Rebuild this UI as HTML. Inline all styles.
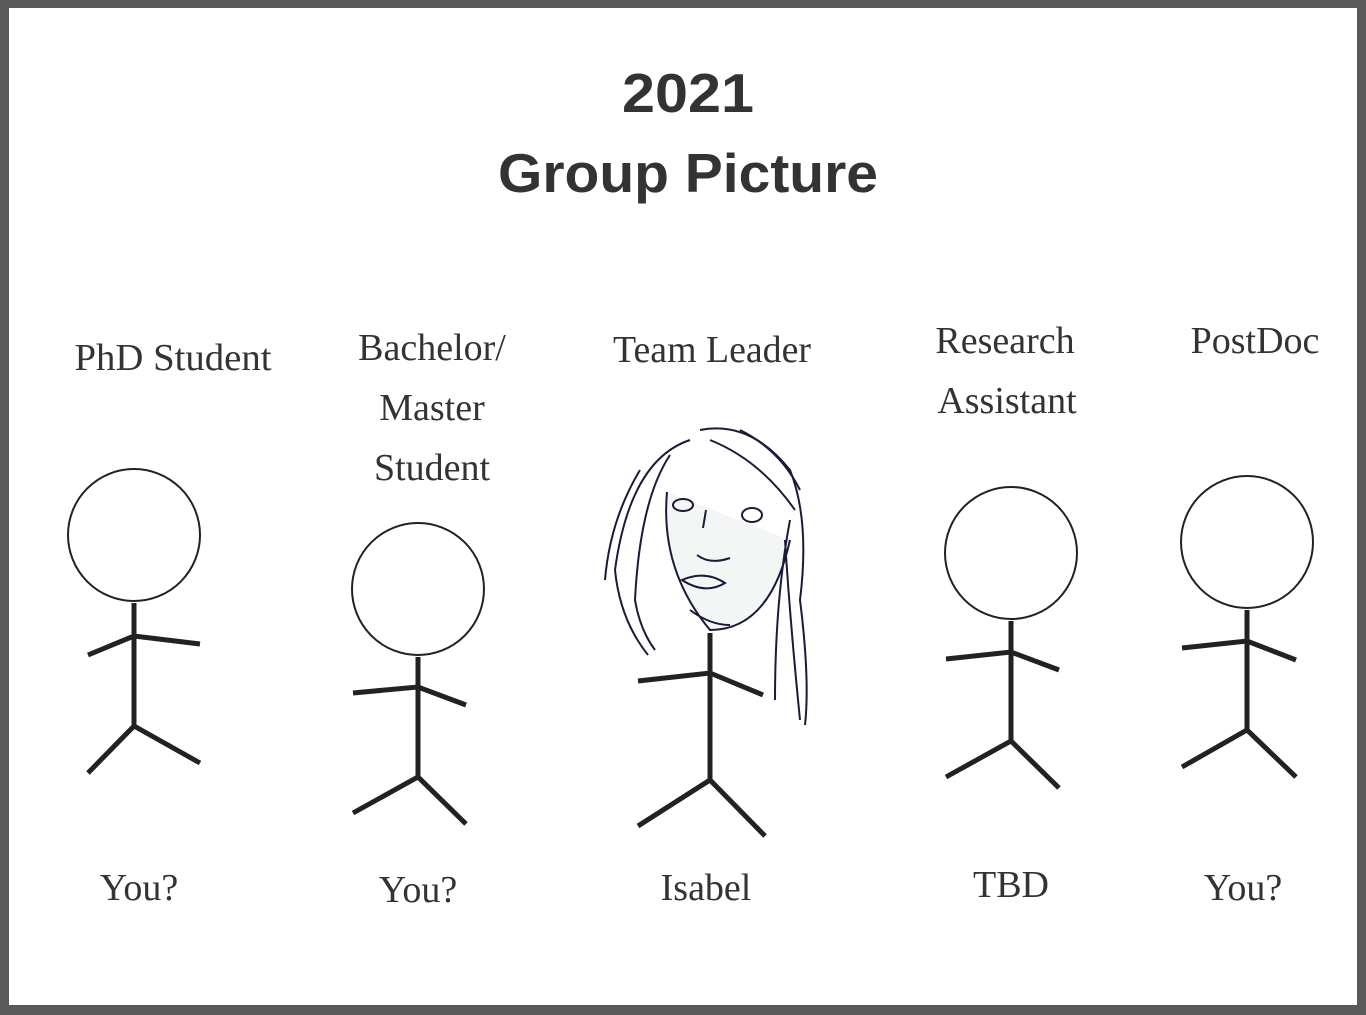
<!DOCTYPE html>
<html><head><meta charset="utf-8"><style>
html,body{margin:0;padding:0;background:#fff}
svg{display:block}
.t{font-family:"Liberation Serif",serif;font-size:38px;fill:#333;text-anchor:middle}
.h{font-family:"Liberation Sans",sans-serif;font-weight:bold;font-size:55px;fill:#333;text-anchor:middle}
</style></head><body>
<svg width="1366" height="1015" viewBox="0 0 1366 1015" xmlns="http://www.w3.org/2000/svg">
<rect x="0" y="0" width="1366" height="1015" fill="#595959"/>
<rect x="9" y="8" width="1348" height="997" fill="#fff"/>
<text class="h" x="688" y="112" textLength="132" lengthAdjust="spacingAndGlyphs">2021</text>
<text class="h" x="688" y="192" textLength="380" lengthAdjust="spacingAndGlyphs">Group Picture</text>
<g class="t">
<text x="173" y="370" textLength="197" lengthAdjust="spacingAndGlyphs">PhD Student</text>
<text x="432" y="360">Bachelor/</text>
<text x="432" y="420">Master</text>
<text x="432" y="480">Student</text>
<text x="712" y="362" textLength="198" lengthAdjust="spacingAndGlyphs">Team Leader</text>
<text x="1005" y="353">Research</text>
<text x="1007" y="413">Assistant</text>
<text x="1255" y="353">PostDoc</text>
<text x="139" y="900">You?</text>
<text x="418" y="902">You?</text>
<text x="706" y="900">Isabel</text>
<text x="1011" y="897">TBD</text>
<text x="1243" y="900">You?</text>
</g>
<g fill="none" stroke="#222" stroke-width="2"><circle cx="134" cy="535" r="66"/><circle cx="418" cy="589" r="66"/><circle cx="1011" cy="553" r="66"/><circle cx="1247" cy="542" r="66"/></g>
<g fill="none" stroke="#222" stroke-width="5">
<path d="M134 603V726M88 655L134 636L200 644M88 773L134 726L200 763"/>
<path d="M418 657V777M353 693L418 687L466 705M353 813L418 777L466 824"/>
<path d="M710 633V780M638 681L710 673L763 695M638 826L710 780L765 836"/>
<path d="M1011 621V741M946 659L1011 652L1059 670M946 777L1011 741L1059 788"/>
<path d="M1247 610V730M1182 648L1247 641L1296 660M1182 767L1247 730L1296 777"/>
</g>
<g fill="none" stroke="#1a1a3a" stroke-width="2">
<path d="M667 492Q660 570 710 630Q770 630 790 540" fill="#f4f6f6"/>
<path d="M690 440Q630 460 615 570Q620 620 648 655"/>
<path d="M670 455Q640 500 635 600Q640 630 655 650"/>
<path d="M700 430Q750 420 790 470Q810 520 800 600Q810 680 805 725"/>
<path d="M710 440Q760 460 795 510"/>
<path d="M740 430Q780 450 800 490"/>
<path d="M790 520Q775 600 775 700"/>
<path d="M785 540Q790 620 800 720"/>
<path d="M605 580Q610 520 640 470"/>
<ellipse cx="683" cy="505" rx="10" ry="6"/>
<ellipse cx="752" cy="515" rx="10" ry="7"/>
<path d="M706 510L703 528M697 555Q710 565 730 558"/>
<path d="M682 580Q705 570 725 583Q705 595 682 580Z"/>
<path d="M690 610Q710 625 730 625"/>
</g>
</svg>
</body></html>
